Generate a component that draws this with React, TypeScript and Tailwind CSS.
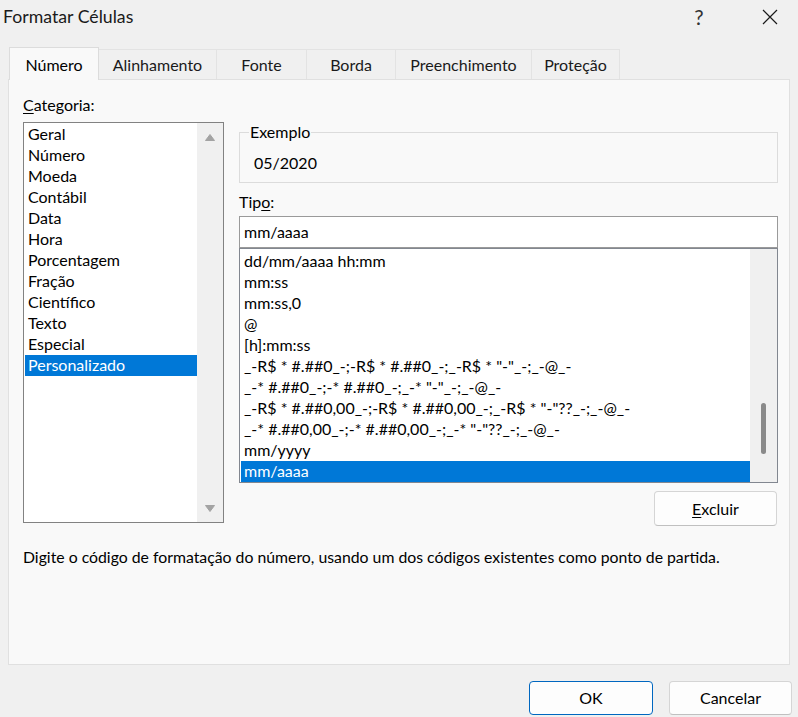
import React from "react";

const categorias = [
  "Geral",
  "Número",
  "Moeda",
  "Contábil",
  "Data",
  "Hora",
  "Porcentagem",
  "Fração",
  "Científico",
  "Texto",
  "Especial",
  "Personalizado",
];

const tipos = [
  "dd/mm/aaaa hh:mm",
  "mm:ss",
  "mm:ss,0",
  "@",
  "[h]:mm:ss",
  '_-R$ * #.##0_-;-R$ * #.##0_-;_-R$ * "-"_-;_-@_-',
  '_-* #.##0_-;-* #.##0_-;_-* "-"_-;_-@_-',
  '_-R$ * #.##0,00_-;-R$ * #.##0,00_-;_-R$ * "-"??_-;_-@_-',
  '_-* #.##0,00_-;-* #.##0,00_-;_-* "-"??_-;_-@_-',
  "mm/yyyy",
  "mm/aaaa",
];

const tabs = [
  { label: "Número", w: "w-[90px]", active: true },
  { label: "Alinhamento", w: "w-[118px]" },
  { label: "Fonte", w: "w-[90px]" },
  { label: "Borda", w: "w-[89px]" },
  { label: "Preenchimento", w: "w-[136px]" },
  { label: "Proteção", w: "w-[88px]" },
];

const ArrowUp = () => (
  <svg width="10" height="7" viewBox="0 0 10 7">
    <path d="M5 0.5 L9.5 6.5 L0.5 6.5 Z" fill="#a3a3a3" stroke="#a3a3a3" strokeLinejoin="round" />
  </svg>
);

const ArrowDown = () => (
  <svg width="10" height="7" viewBox="0 0 10 7">
    <path d="M0.5 0.5 L9.5 0.5 L5 6.5 Z" fill="#a3a3a3" stroke="#a3a3a3" strokeLinejoin="round" />
  </svg>
);

const TitleBar = () => (
  <div className="h-[34px] flex items-center pl-[3px] text-[17.7px] text-[#1a1a1a]">
    <span>Formatar Células</span>
    <div className="ml-auto flex items-center gap-[25px] pr-[5px]">
      <div className="w-[46px] h-[34px] flex items-center justify-center text-[21px] text-[#333]">?</div>
      <div className="w-[46px] h-[34px] flex items-center justify-center">
        <svg width="16" height="16" viewBox="0 0 16 16">
          <path d="M1 1 L15 15 M15 1 L1 15" stroke="#1a1a1a" strokeWidth="1.2" />
        </svg>
      </div>
    </div>
  </div>
);

export default function App() {
  return (
    <div className="w-[798px] h-[717px] bg-[#f0f0f0] text-[16px] text-black font-[family-name:'Segoe_UI',Lato,sans-serif] flex flex-col overflow-hidden">
      <TitleBar />

      {/* tabs */}
      <div className="flex items-end h-[32px] mt-[13px] pl-[9px] relative z-10">
        {tabs.map((t) =>
          t.active ? (
            <div
              key={t.label}
              className={`${t.w} h-[33px] -mb-px pt-px bg-[#f9f9f9] border border-b-0 border-[#dcdcdc] flex items-center justify-center`}>
              {t.label}
            </div>
          ) : (
            <div
              key={t.label}
              className={`${t.w} h-[30px] pt-px border border-b-0 border-l-0 border-[#e3e3e3] flex items-center justify-center text-[#1a1a1a]`}>
              {t.label}
            </div>
          )
        )}
      </div>

      {/* panel */}
      <div className="mx-[8px] h-[586px] bg-[#f9f9f9] border border-[#e0e0e0] flex flex-col pl-[14px] pr-[11px] pt-[15px]">
        <div className="flex gap-[15px]">
          {/* categoria */}
          <div className="w-[201px] shrink-0 flex flex-col">
            <div className="h-[20px] leading-[20px]">
              <span className="underline underline-offset-2">C</span>ategoria:
            </div>
            <div className="mt-[7px] h-[401px] border border-[#828282] bg-white flex">
              <div className="flex-1 pl-px pt-px">
                {categorias.map((c) => (
                  <div
                    key={c}
                    className={`h-[21px] leading-[19px] pl-[3px] ${
                      c === "Personalizado" ? "bg-[#0078d7] text-white" : ""
                    }`}>
                    {c}
                  </div>
                ))}
              </div>
              <div className="w-[26px] bg-[#f0f0f0] flex flex-col items-center pt-[11px] pb-[10px]">
                <ArrowUp />
                <div className="mt-auto">
                  <ArrowDown />
                </div>
              </div>
            </div>
          </div>

          {/* right column */}
          <div className="w-[539px] shrink-0 flex flex-col pt-[27px]">
            <fieldset className="h-[61px] border border-[#dcdcdc] pl-[9px] pt-[11px]">
              <legend className="leading-[20px] px-px">Exemplo</legend>
              <div className="pl-[5px] leading-[20px]">05/2020</div>
            </fieldset>

            <div className="mt-[9px] h-[20px] leading-[20px]">
              Tip<span className="underline underline-offset-2">o</span>:
            </div>
            <div className="mt-[4px] h-[32px] border border-[#9a9a9a] bg-white flex items-center pl-[4px]">
              mm/aaaa
            </div>
            <div className="h-[235px] border border-[#828790] bg-white flex">
              <div className="flex-1 pl-px pt-[2px]">
                {tipos.map((t) => (
                  <div
                    key={t}
                    className={`h-[21px] leading-[19px] pl-[3px] whitespace-pre ${
                      t === "mm/aaaa" ? "bg-[#0078d7] text-white" : ""
                    }`}>
                    {t}
                  </div>
                ))}
              </div>
              <div className="w-[27px] bg-[#f0f0f0] flex flex-col items-center pt-[154px]">
                <div className="w-[5px] h-[51px] rounded-full bg-[#8a8a8a]" />
              </div>
            </div>

            <button className="mt-[8px] ml-auto mr-px w-[123px] h-[35px] rounded-[4px] border border-[#d5d5d5] border-b-[#c0c0c0] bg-[#fdfdfd]">
              <span className="underline underline-offset-2">E</span>xcluir
            </button>
          </div>
        </div>

        <p className="mt-[21px] leading-[20px] text-[15.8px]">
          Digite o código de formatação do número, usando um dos códigos existentes como ponto de partida.
        </p>
      </div>

      {/* buttons */}
      <div className="mt-[16px] flex justify-end gap-[16px] pr-[6px]">
        <button className="w-[124px] h-[34px] rounded-[4px] border border-[#0067c0] bg-[#fdfdfd]">OK</button>
        <button className="w-[123px] h-[34px] rounded-[4px] border border-[#d5d5d5] border-b-[#c0c0c0] bg-[#fdfdfd]">
          Cancelar
        </button>
      </div>
    </div>
  );
}
